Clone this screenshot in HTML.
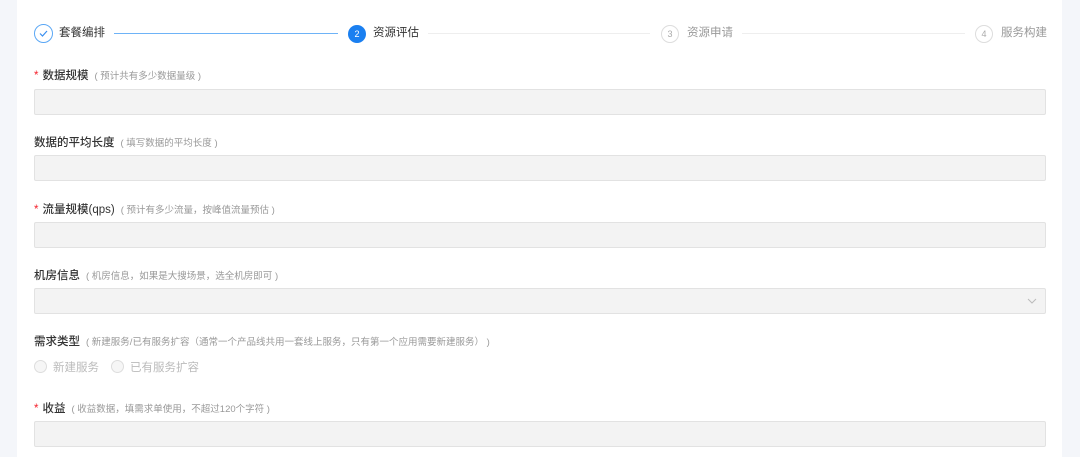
<!DOCTYPE html>
<html><head><meta charset="utf-8"><style>
body{margin:0;width:1080px;height:457px;background:#f4f6fa;font-family:"Liberation Sans","Noto Sans CJK SC",sans-serif;position:relative;overflow:hidden}
.panel{position:absolute;left:17px;top:0;width:1045px;height:457px;background:#fff}
.a{position:absolute}
.lbl{position:absolute;left:34px;font-size:11.5px;color:#333;font-weight:500;line-height:14px}
.lbl i{font-style:normal;color:#f5222d;margin-right:4px}
.lbl small{font-size:9.5px;color:#999;font-weight:normal;margin-left:6px}
.inp{position:absolute;left:34px;width:1010px;height:24px;background:#f3f3f3;border:1px solid #e2e2e2;border-radius:2px}
.circ{position:absolute;width:16px;height:16px;border-radius:50%;box-sizing:border-box;font-size:9px;text-align:center;line-height:15px}
.st{position:absolute;font-size:11.5px;line-height:14px;top:26px}
.ln{position:absolute;top:33px;height:1px}
</style></head><body>
<div class="panel"></div>
<div class="circ" style="left:34px;top:24px;width:19px;height:19px;border:1px solid #5aa7f5"><svg width="17" height="17" viewBox="0 0 17 17"><path d="M5 8.5l2.5 2.5 4.5-5" fill="none" stroke="#3a8ff0" stroke-width="1.2"/></svg></div>
<div class="st" style="left:59px;color:#333">套餐编排</div>
<div class="ln" style="left:114px;width:224px;background:#6eb3f7"></div>
<div class="circ" style="left:348px;top:25px;width:18px;height:18px;background:#1a7ff0;color:#fff;line-height:18px">2</div>
<div class="st" style="left:373px;color:#333">资源评估</div>
<div class="ln" style="left:428px;width:222px;background:#eee"></div>
<div class="circ" style="left:661px;top:25px;width:18px;height:18px;border:1px solid #ddd;color:#aaa;line-height:16px">3</div>
<div class="st" style="left:687px;color:#999">资源申请</div>
<div class="ln" style="left:742px;width:223px;background:#eee"></div>
<div class="circ" style="left:975px;top:25px;width:18px;height:18px;border:1px solid #ddd;color:#aaa;line-height:16px">4</div>
<div class="st" style="left:1001px;color:#999">服务构建</div>

<div class="lbl" style="top:69px"><i>*</i>数据规模<small>( 预计共有多少数据量级 )</small></div>
<div class="inp" style="top:89px"></div>
<div class="lbl" style="top:136px">数据的平均长度<small>( 填写数据的平均长度 )</small></div>
<div class="inp" style="top:155px"></div>
<div class="lbl" style="top:203px"><i>*</i>流量规模(qps)<small>( 预计有多少流量，按峰值流量预估 )</small></div>
<div class="inp" style="top:222px"></div>
<div class="lbl" style="top:269px">机房信息<small>( 机房信息，如果是大搜场景，选全机房即可 )</small></div>
<div class="inp" style="top:288px"><svg class="a" style="right:8px;top:8px" width="10" height="8"><path d="M1 2l4 4 4-4" fill="none" stroke="#bbb"/></svg></div>
<div class="lbl" style="top:335px">需求类型<small>( 新建服务/已有服务扩容（通常一个产品线共用一套线上服务，只有第一个应用需要新建服务） )</small></div>
<div class="circ" style="left:34px;top:360px;width:13px;height:13px;border:1px solid #ddd;background:#f6f6f6"></div>
<div class="a" style="left:53px;top:359px;font-size:11.5px;color:#bbb">新建服务</div>
<div class="circ" style="left:111px;top:360px;width:13px;height:13px;border:1px solid #ddd;background:#f6f6f6"></div>
<div class="a" style="left:130px;top:359px;font-size:11.5px;color:#bbb">已有服务扩容</div>
<div class="lbl" style="top:402px"><i>*</i>收益<small>( 收益数据，填需求单使用，不超过120个字符 )</small></div>
<div class="inp" style="top:421px"></div>
</body></html>
